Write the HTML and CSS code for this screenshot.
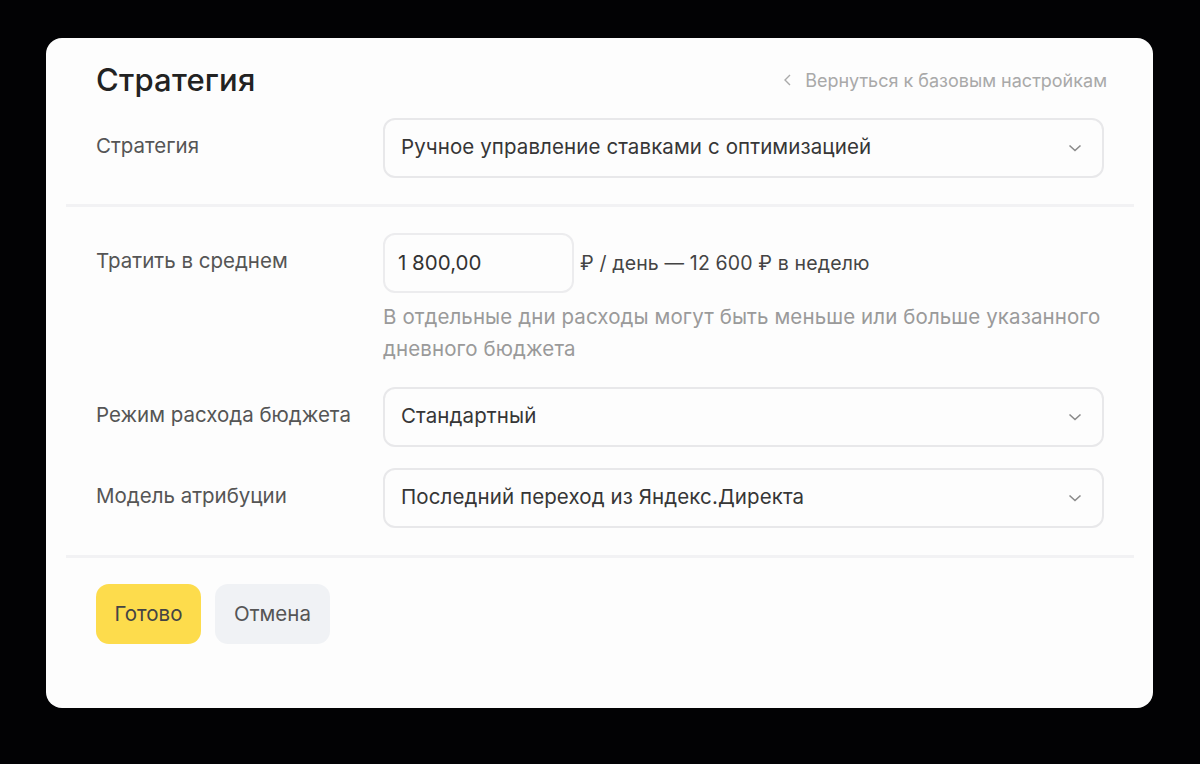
FILE: index.html
```html
<!DOCTYPE html>
<html>
  <head>
    <title>Стратегия</title>
    <meta charset='UTF-8'>
    <link rel="stylesheet" href="styles.css">
  </head>
  <body>
    <div class='card'>
      <div class='header'>
        <h1>Стратегия</h1>
        <a class='backLink' href='#'>
          <svg width='10' height='12' viewBox='0 0 10 12'><path d='M7 1 L2 6 L7 11' fill='none' stroke='#aaa' stroke-width='1.4'/></svg>
          Вернуться к базовым настройкам
        </a>
      </div>

      <div class='section first'>
        <div class='row'>
          <div class='label'>Стратегия</div>
          <div class='select'>
            <span>Ручное управление ставками с оптимизацией</span>
            <svg class='chevron' width='14' height='8' viewBox='0 0 14 8'><path d='M1.5 1.5 L7 6.5 L12.5 1.5' fill='none' stroke='#8a8a8a' stroke-width='1.6'/></svg>
          </div>
        </div>
      </div>

      <div class='divider'></div>

      <div class='section second'>
        <div class='row'>
          <div class='label'>Тратить в среднем</div>
          <div>
            <div class='budgetLine'>
              <div class='input'>1 800,00</div>
              <span class='budgetText'>₽ / день — 12 600 ₽ в неделю</span>
            </div>
            <p class='hint'>В отдельные дни расходы могут быть меньше или больше указанного<br>дневного бюджета</p>
          </div>
        </div>

        <div class='row spaced'>
          <div class='label'>Режим расхода бюджета</div>
          <div class='select'>
            <span>Стандартный</span>
            <svg class='chevron' width='14' height='8' viewBox='0 0 14 8'><path d='M1.5 1.5 L7 6.5 L12.5 1.5' fill='none' stroke='#8a8a8a' stroke-width='1.6'/></svg>
          </div>
        </div>

        <div class='row spacedSmall'>
          <div class='label'>Модель атрибуции</div>
          <div class='select'>
            <span>Последний переход из Яндекс.Директа</span>
            <svg class='chevron' width='14' height='8' viewBox='0 0 14 8'><path d='M1.5 1.5 L7 6.5 L12.5 1.5' fill='none' stroke='#8a8a8a' stroke-width='1.6'/></svg>
          </div>
        </div>
      </div>

      <div class='divider'></div>

      <div class='buttons'>
        <button class='primary'>Готово</button>
        <button class='secondary'>Отмена</button>
      </div>
    </div>
  </body>
</html>
```

FILE: styles.css
```css
body {
  margin: 0;
  background-color: #020204;
  font-family: Inter, "Noto Sans", sans-serif;
  height: 764px;
  overflow: hidden;
}

.card {
  width: 1107px;
  height: 670px;
  margin: 38px 0 0 46px;
  background-color: #fdfdfd;
  border-radius: 16px;
  box-sizing: border-box;
}

.header {
  display: flex;
  justify-content: space-between;
  align-items: center;
  padding: 24px 46px 0 50px;
  height: 60px;
  box-sizing: border-box;
}

.header h1 {
  margin: 0;
  font-size: 31px;
  font-weight: 500;
  line-height: 36px;
  color: #222;
  letter-spacing: 0.2px;
}

.backLink {
  display: flex;
  align-items: center;
  gap: 12px;
  color: #a9a9a9;
  font-size: 18px;
  text-decoration: none;
}

.section {
  padding: 0 49px 0 50px;
}

.section.first {
  padding-top: 20px;
  padding-bottom: 26px;
}

.section.second {
  padding-top: 26px;
  padding-bottom: 27px;
}

.divider {
  height: 3px;
  margin: 0 19px 0 20px;
  background-color: #f2f2f4;
}

.row {
  display: grid;
  grid-template-columns: 287px 1fr;
  align-items: start;
}

.row.spaced {
  margin-top: 22px;
}

.row.spacedSmall {
  margin-top: 21px;
}

.label {
  padding-top: 15px;
  font-size: 20.5px;
  line-height: 26px;
  color: #555;
}

.select {
  display: flex;
  justify-content: space-between;
  align-items: center;
  height: 60px;
  box-sizing: border-box;
  padding: 0 20px 4px 16px;
  border: 2px solid #e8e8ea;
  border-radius: 12px;
  font-size: 20.5px;
  letter-spacing: 0.1px;
  color: #363636;
}

.chevron {
  margin-top: 4px;
}

.budgetLine {
  display: flex;
  align-items: center;
  gap: 6px;
}

.input {
  display: flex;
  align-items: center;
  width: 191px;
  height: 60px;
  box-sizing: border-box;
  padding: 0 0 2px 13px;
  border: 2px solid #ececee;
  border-radius: 12px;
  font-size: 20.5px;
  color: #333;
}

.budgetText {
  font-size: 19.5px;
  letter-spacing: 0.15px;
  color: #444;
}

.hint {
  margin: 8px 0 0 0;
  font-size: 20.5px;
  letter-spacing: 0.1px;
  line-height: 32px;
  color: #9a9a9a;
}

.buttons {
  display: flex;
  gap: 14px;
  padding: 26px 50px 0 50px;
}

button {
  height: 60px;
  border: none;
  border-radius: 13px;
  font-family: Inter, "Noto Sans", sans-serif;
  font-size: 20.5px;
  color: #444;
  padding: 0 0 2px 0;
}

.primary {
  width: 105px;
  background-color: #fddc4c;
}

.secondary {
  width: 115px;
  background-color: #f0f2f5;
  color: #555;
}
```
